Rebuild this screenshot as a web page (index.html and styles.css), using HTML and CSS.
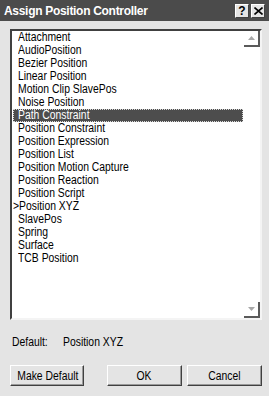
FILE: index.html
```html
<!DOCTYPE html>
<html>
<head>
<meta charset="utf-8">
<link rel="stylesheet" href="styles.css">
</head>
<body>
<div class="dialog">
  <div class="titlebar">
    <span class="title">Assign Position Controller</span>
    <div class="tbtns">
      <span class="tbtn help">?</span>
      <span class="tbtn close"><svg width="9" height="8" viewBox="0 0 9 8"><path d="M0.5 0.5 L8.5 7.5 M8.5 0.5 L0.5 7.5" stroke="#000" stroke-width="1.6" fill="none"/></svg></span>
    </div>
  </div>
  <div class="body">
    <div class="listbox">
      <ul class="items">
        <li><span class="cx">Attachment</span></li>
        <li><span class="cx">AudioPosition</span></li>
        <li><span class="cx">Bezier Position</span></li>
        <li><span class="cx">Linear Position</span></li>
        <li><span class="cx">Motion Clip SlavePos</span></li>
        <li><span class="cx">Noise Position</span></li>
        <li class="selected"><span class="cx">Path Constraint</span></li>
        <li><span class="cx">Position Constraint</span></li>
        <li><span class="cx">Position Expression</span></li>
        <li><span class="cx">Position List</span></li>
        <li><span class="cx">Position Motion Capture</span></li>
        <li><span class="cx">Position Reaction</span></li>
        <li><span class="cx">Position Script</span></li>
        <li class="current"><span class="cx">&gt;Position XYZ</span></li>
        <li><span class="cx">SlavePos</span></li>
        <li><span class="cx">Spring</span></li>
        <li><span class="cx">Surface</span></li>
        <li><span class="cx">TCB Position</span></li>
      </ul>
      <div class="scrollbar">
        <div class="arrow"><svg width="7" height="4" viewBox="0 0 7 4"><path d="M3.5 0 L7 4 L0 4 Z" fill="#a8a8a8"/></svg></div>
        <div class="track"></div>
        <div class="arrow"><svg width="7" height="4" viewBox="0 0 7 4"><path d="M0 0 L7 0 L3.5 4 Z" fill="#a8a8a8"/></svg></div>
      </div>
    </div>
    <div class="default-row">
      <span class="lbl"><span class="cx">Default:</span></span>
      <span class="val"><span class="cx">Position XYZ</span></span>
    </div>
    <div class="buttons">
      <button class="btn make"><span class="cx">Make Default</span></button>
      <button class="btn"><span class="cx">OK</span></button>
      <button class="btn"><span class="cx">Cancel</span></button>
    </div>
  </div>
</div>
</body>
</html>
```
FILE: styles.css
```css
* { box-sizing: border-box; }
html, body { margin: 0; padding: 0; }
body {
  width: 269px;
  height: 396px;
  background: #e4e4e4;
  font-family: "Liberation Sans", Arial, sans-serif;
  font-size: 12.5px;
  color: #000;
  overflow: hidden;
}
.cx {
  display: inline-block;
  white-space: nowrap;
  transform: scaleX(0.83);
  transform-origin: left center;
}
.dialog {
  width: 269px;
  height: 396px;
  display: flex;
  flex-direction: column;
}
.titlebar {
  height: 21px;
  background: #4b4b4b;
  display: flex;
  align-items: center;
  justify-content: space-between;
  padding: 0 4px 0 4px;
}
.title {
  color: #fff;
  font-weight: bold;
  font-size: 12px;
  letter-spacing: -0.3px;
  line-height: 21px;
  padding-top: 1px;
}
.tbtns {
  display: flex;
  gap: 2px;
  padding-top: 1px;
}
.tbtn {
  width: 14px;
  height: 14px;
  background: #e4e4e4;
  border-top: 1px solid #fff;
  border-left: 1px solid #fff;
  border-right: 1px solid #404040;
  border-bottom: 1px solid #404040;
  display: flex;
  align-items: center;
  justify-content: center;
  font-weight: bold;
  font-size: 12px;
  line-height: 12px;
}
.body {
  padding: 8px 7px 0 10px;
  display: flex;
  flex-direction: column;
}
.listbox {
  width: 252px;
  height: 291px;
  background: #fff;
  border-style: solid;
  border-width: 2px;
  border-color: #404040 #f4f4f4 #f4f4f4 #404040;
  display: flex;
}
.items {
  list-style: none;
  margin: 0;
  padding: 0 1px;
  width: 232px;
  flex-shrink: 0;
}
.items li {
  height: 13px;
  line-height: 13px;
  padding-left: 5px;
  white-space: nowrap;
}
.items li.current { padding-left: 0; }
.items li.selected {
  background: #4d4d4d;
  color: #fff;
  outline: 1px dotted #d8d8d8;
  outline-offset: -1px;
}
.scrollbar {
  width: 16px;
  display: flex;
  flex-direction: column;
}
.arrow {
  height: 16px;
  background: #fff;
  border-right: 2px solid #5a5a5a;
  border-bottom: 2px solid #5a5a5a;
  display: flex;
  align-items: center;
  justify-content: center;
}
.track { flex: 1; }
.default-row {
  margin-top: 16px;
  padding-left: 2px;
  height: 13px;
  line-height: 13px;
  display: flex;
}
.lbl { width: 51px; }
.buttons {
  margin-top: 16px;
  display: flex;
  gap: 5px;
}
.btn {
  width: 75px;
  height: 21px;
  background: #e4e4e4;
  font-family: inherit;
  font-size: 12.5px;
  color: #000;
  padding: 0;
  border-style: solid;
  border-width: 1px;
  border-color: #fff #404040 #404040 #fff;
  box-shadow: inset -1px -1px 0 #9a9a9a;
  white-space: nowrap;
}
.btn .cx { transform-origin: center center; }
.btn.make { width: 74px; margin-right: 18px; }
```
